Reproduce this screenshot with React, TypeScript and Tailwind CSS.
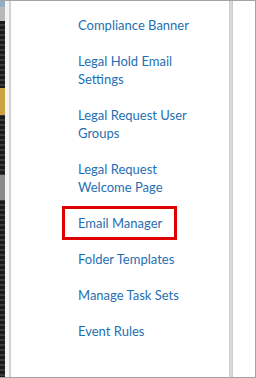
import React from "react";

const items: string[][] = [
  ["Compliance Banner"],
  ["Legal Hold Email", "Settings"],
  ["Legal Request User", "Groups"],
  ["Legal Request", "Welcome Page"],
  ["Email Manager"],
  ["Folder Templates"],
  ["Manage Task Sets"],
  ["Event Rules"],
];

export default function App() {
  return (
    <div className="w-[256px] h-[378px] flex border-t border-b border-r border-[#a3a3a3] bg-white overflow-hidden">
      {/* dark strip from screenshot behind */}
      <div className="w-[5px] flex flex-col bg-[repeating-linear-gradient(180deg,#1a1a1a_0px,#1a1a1a_3px,#3a3a3a_3px,#3a3a3a_5px)]">
        <div className="h-[6px] bg-[#8fb0c0]" />
        <div className="h-[14px] bg-[#b8b8b8]" />
        <div className="h-[67px]" />
        <div className="h-[28px] bg-[#c9a242]" />
        <div className="h-[60px]" />
        <div className="h-[25px] bg-[#8a8a8a]" />
        <div className="h-[178px]" />
      </div>
      <div className="w-[4px] bg-[#f4f4f4]" />
      <div className="w-[2px] bg-[#d2d2d2]" />
      <div className="w-[218px] flex flex-col pt-[15px] pl-[67px] gap-[18px] font-['Lato',sans-serif] text-[13px] leading-[18px] text-[#1f6fb2]">
        {items.map((lines, i) => {
          const active = lines[0] === "Email Manager";
          return (
            <div key={i} className="relative">
              {active && (
                <div className="absolute left-[-16px] top-[-8px] w-[115px] h-[34px] border-[3px] border-[#e00000] pointer-events-none" />
              )}
              {lines.map((l) => (
                <div key={l} className="whitespace-nowrap">{l}</div>
              ))}
            </div>
          );
        })}
      </div>
      <div className="w-[4px] bg-[linear-gradient(90deg,#c8c8c8,#dedede_50%,#c8c8c8)]" />
      <div className="flex-1" />
    </div>
  );
}
